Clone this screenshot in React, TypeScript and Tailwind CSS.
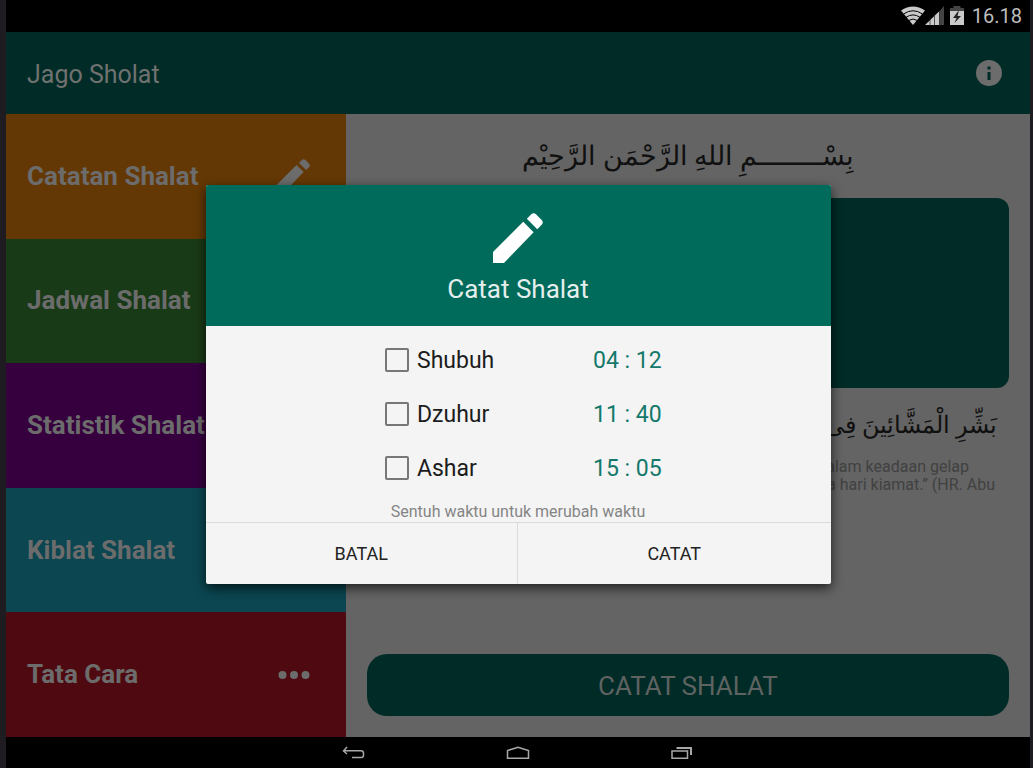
import React from "react";

type MenuItem = { label: string; color: string; icon?: React.ReactNode };

function PencilIcon({ className }: { className: string }) {
  return (
    <svg viewBox="0 0 48 48" className={className} fill="currentColor" aria-hidden="true">
      <path d="M0 48V37.500L29 8.500L39 18.500L10.500 48Z" />
      <path d="M32.500 5.500L36.500 1.500Q39-.8 41.500 1.500L46.500 6.500Q49 9 46.500 11.500L42.500 15.500Z" />
    </svg>
  );
}

function DotsIcon() {
  return (
    <svg viewBox="0 0 32 8" className="h-2 w-8" fill="currentColor" aria-hidden="true">
      <circle cx="4.500" cy="4" r="4" />
      <circle cx="16" cy="4" r="4" />
      <circle cx="27.500" cy="4" r="4" />
    </svg>
  );
}

const menu: MenuItem[] = [
  { label: "Catatan Shalat", color: "bg-[#643804]", icon: <PencilIcon className="size-[34px]" /> },
  { label: "Jadwal Shalat", color: "bg-[#193a17]" },
  { label: "Statistik Shalat", color: "bg-[#36003f]" },
  { label: "Kiblat Shalat", color: "bg-[#0b4651]" },
  { label: "Tata Cara", color: "bg-[#4f0a11]", icon: <DotsIcon /> },
];

const prayers = [
  { id: "shubuh", name: "Shubuh", time: "04 : 12" },
  { id: "dzuhur", name: "Dzuhur", time: "11 : 40" },
  { id: "ashar", name: "Ashar", time: "15 : 05" },
];

function StatusBar() {
  return (
    <div className="flex h-8 shrink-0 items-center justify-end bg-black pr-2 text-[#bdbdbd]">
      <svg viewBox="0 0 24 20" className="h-5 w-6" fill="none" aria-hidden="true">
        <path d="M0 4.500Q12-3.500 24 4.500L12 19Z" fill="#cacaca" />
        <path
          d="M2.500 8Q12 1.500 21.500 8M5 11.300Q12 6.500 19 11.300M7.800 14.500Q12 11.500 16.200 14.500"
          stroke="#000"
          strokeWidth="1"
        />
      </svg>
      <svg viewBox="0 0 20 20" className="h-5 w-5" aria-hidden="true">
        <path d="M0 19L14.500 5V19Z" fill="#cacaca" />
        <path d="M15 4.500L19 0V19H15Z" fill="#444" />
        <path d="M5 12V20M9.500 8V20M14.500 4V20" stroke="#222" strokeWidth=".7" />
      </svg>
      <svg viewBox="0 0 14 20" className="ml-[5px] h-5 w-[14px]" aria-hidden="true">
        <path d="M3.500 0H10.500V2H14V6H0V2H3.500Z" fill="#444" />
        <path d="M0 5H14V19H0Z" fill="#cacaca" />
        <path d="M9 4L3 12H6.500L4.500 17L11 10H7.500Z" fill="#222" />
      </svg>
      <span className="ml-2 text-[20px] leading-8">16.18</span>
    </div>
  );
}

function RecordDialog() {
  return (
    <section
      role="dialog"
      aria-labelledby="dialog-title"
      className="w-full max-w-[625px] overflow-hidden rounded-[2px] bg-[#f4f4f4] shadow-[0_4px_12px_rgba(0,0,0,0.7)]"
    >
      <header className="flex h-[141px] flex-col items-center bg-[#006a5b] pt-7 text-white">
        <PencilIcon className="size-[50px]" />
        <h2 id="dialog-title" className="mt-2 text-[26px] leading-9 text-[#e4efed]">
          Catat Shalat
        </h2>
      </header>
      <div className="flex flex-col items-center pt-2">
        {prayers.map((p) => (
          <div key={p.id} className="flex h-[54px] w-[290px] items-center">
            <input
              id={p.id}
              type="checkbox"
              className="mb-[2px] ml-3 size-6 appearance-none rounded-[2px] border-2 border-[#777] checked:bg-[#006a5b]"
            />
            <label htmlFor={p.id} className="ml-2 flex-1 text-[23px] leading-8 text-[#1c1c1c]">
              {p.name}
            </label>
            <button className="w-[70px] text-left text-[23px] leading-8 whitespace-nowrap text-[#14796a]">
              {p.time}
            </button>
          </div>
        ))}
        <p className="mt-[6px] text-[16px] leading-5 text-[#858585]">Sentuh waktu untuk merubah waktu</p>
      </div>
      <footer className="grid h-[62px] grid-cols-2 divide-x divide-[#dadada] border-t border-[#dadada] text-[18px] text-[#222]">
        <button>BATAL</button>
        <button>CATAT</button>
      </footer>
    </section>
  );
}

export default function App() {
  return (
    <div className="relative flex min-h-screen flex-col bg-[#1e1c20] pr-[3px] pl-[6px] font-[Roboto,'Noto_Sans',sans-serif]">
      <StatusBar />
      <header className="flex h-[82px] shrink-0 items-center justify-between bg-[#002b26] pr-7 pl-[21px] text-[#707270]">
        <h1 className="pt-1 text-[25px]">Jago Sholat</h1>
        <button aria-label="Info">
          <svg viewBox="0 0 26 26" className="size-[26px]" aria-hidden="true">
            <circle cx="13" cy="13" r="13" fill="#6c6c6c" />
            <path d="M11.500 6.500H14.500V9.500H11.500ZM11.500 12H14.500V20H11.500Z" fill="#002b26" />
          </svg>
        </button>
      </header>
      <div className="flex flex-1">
        <nav className="flex w-[33.2%] shrink-0 flex-col">
          {menu.map((m) => (
            <a
              key={m.label}
              href="#"
              className={`flex flex-1 items-center justify-between pr-9 pl-[21px] text-[26px] font-bold text-[#6c6c6c] ${m.color}`}
            >
              <span className="whitespace-nowrap">{m.label}</span>
              {m.icon}
            </a>
          ))}
        </nav>
        <main className="flex min-w-0 flex-1 flex-col bg-[#646464] px-[21px] pb-[21px]">
          <p dir="rtl" lang="ar" className="h-[84px] text-center text-[27px] leading-[84px] text-[#101010]">
            بِسْــــــــمِ اللهِ الرَّحْمَن الرَّحِيْم
          </p>
          <div className="h-[190px] rounded-[12px] bg-[#002b26]" />
          <p dir="rtl" lang="ar" className="mt-3 h-[58px] pr-3 text-[24px] leading-[50px] text-[#101010]">
            بَشِّرِ الْمَشَّائِينَ فِى
          </p>
          <div className="flex flex-col items-end pr-[14px] text-[16px] leading-[18px] text-[#414141]">
            <p className="pr-[26px]">dalam keadaan gelap</p>
            <p>pada hari kiamat.” (HR. Abu</p>
          </div>
          <button className="mt-auto h-[62px] rounded-[20px] bg-[#002b26] pt-[2px] text-[26px] text-[#5e6362]">
            CATAT SHALAT
          </button>
        </main>
      </div>
      <nav className="flex h-[31px] shrink-0 items-center justify-center gap-[140px] bg-black text-[#a8a8a8]">
        <button aria-label="Kembali">
          <svg viewBox="0 0 24 14" className="h-[14px] w-6" fill="none" stroke="currentColor" strokeWidth="1.500" aria-hidden="true">
            <path d="M5 1L1.500 5L5 8M1.500 4.800H19Q21.500 4.800 21.500 7.500V9.500Q21.500 11.500 19 11.500H10" />
          </svg>
        </button>
        <button aria-label="Beranda">
          <svg viewBox="0 0 24 14" className="h-[14px] w-6" fill="none" stroke="currentColor" strokeWidth="1.500" aria-hidden="true">
            <path d="M1.500 12.300V4.500L12 1.200L22.500 4.500V12.300Z" />
          </svg>
        </button>
        <button aria-label="Aplikasi terbaru">
          <svg viewBox="0 0 24 14" className="h-[14px] w-6" fill="none" stroke="currentColor" strokeWidth="1.500" aria-hidden="true">
            <path d="M2 5H17.500V12.300H2Z" />
            <path d="M6.500 2H21V9" strokeWidth="2" />
          </svg>
        </button>
      </nav>
      <div className="absolute inset-0 flex items-center justify-center pr-[3px] pl-[6px]">
        <RecordDialog />
      </div>
    </div>
  );
}
